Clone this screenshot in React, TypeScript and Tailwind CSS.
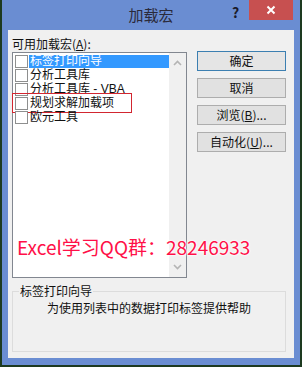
import React from 'react';

const ITEMS = ['标签打印向导', '分析工具库', '分析工具库 - VBA', '规划求解加载项', '欧元工具'];

const FONT = { fontFamily: '"Noto Sans CJK SC", "Liberation Sans", sans-serif' };
const TIGHT = { fontFamily: '"Liberation Sans", "Noto Sans CJK SC", sans-serif' };

function Chevron({ up }: { up?: boolean }) {
  return (
    <svg width="9" height="6" viewBox="0 0 9 6">
      <path
        d={up ? 'M1 5 L4.5 1.5 L8 5' : 'M1 1 L4.5 4.5 L8 1'}
        fill="none"
        stroke="#b4b4b4"
        strokeWidth="1.6"
      />
    </svg>
  );
}

function Button({ children, primary }: { children: React.ReactNode; primary?: boolean }) {
  return (
    <div
      className={`h-[20px] w-[89px] flex items-center justify-center text-[12px] text-[#111] border ${
        primary ? 'border-[#3c7fb1] bg-[#e5e5e5]' : 'border-[#adadad] bg-[#e1e1e1]'
      }`}
    >
      {children}
    </div>
  );
}

export default function App() {
  return (
    <div className="w-[302px] h-[367px] bg-[#1d3a20] px-[2px] pb-[2px]" style={FONT}>
      <div className="w-full h-full bg-[#6a8dd2] flex flex-col">
        {/* Title bar */}
        <div className="relative h-[30px] flex items-center justify-center shrink-0">
          <span className="text-[15px] text-[#2a2a3a] leading-none mt-[-2px]">加载宏</span>
          <span className="absolute left-[230px] top-[2px] text-[14px] font-bold text-[#1a1a2a]">?</span>
          <div className="absolute left-[247px] top-0 w-[44px] h-[20px] bg-[#c75050] flex items-center justify-center">
            <svg width="10" height="10" viewBox="0 0 10 10">
              <path d="M1.5 1.5 L8.5 8.5 M8.5 1.5 L1.5 8.5" stroke="#fff" strokeWidth="2" />
            </svg>
          </div>
        </div>

        {/* Client area */}
        <div className="relative mx-[6px] mb-[7px] flex-1 bg-[#f0f0f0] px-[4px] pt-[6px]">
          <div className="flex gap-[10px]">
            <div className="w-[175px] flex flex-col">
              <div className="h-[16px] text-[12px] leading-[16px] text-[#111]">
                可用加载宏(<span className="underline">A</span>):
              </div>
              <div className="h-[226px] border border-[#828790] bg-white flex">
                <div className="flex-1 pt-px pl-[2px] flex flex-col" style={TIGHT}>
                  {ITEMS.map((it, i) => (
                    <div
                      key={it}
                      className={`relative h-[14px] flex items-center ${
                        i === 3 ? 'outline outline-1 outline-[#d22630] outline-offset-[2px] w-[114px]' : ''
                      }`}
                    >
                      <div className="w-[13px] h-[13px] border border-[#8e8f8f] bg-white shrink-0" />
                      <span
                        className={`ml-[1px] h-[13px] text-[12px] leading-[13px] pl-[1px] ${
                          i === 0 ? 'flex-1 bg-[#3399ff] text-white' : 'text-[#111]'
                        }`}
                      >
                        {it}
                      </span>
                    </div>
                  ))}
                </div>
                <div className="w-[17px] bg-[#f0f0f0] flex flex-col items-center justify-between py-[7px]">
                  <Chevron up />
                  <Chevron />
                </div>
              </div>
            </div>
            <div className="flex flex-col gap-[7px] pt-[15px]">
              <Button primary>确定</Button>
              <Button>取消</Button>
              <Button>
                浏览(<span className="underline">B</span>)...
              </Button>
              <Button>
                自动化(<span className="underline">U</span>)...
              </Button>
            </div>
          </div>

          <fieldset className="mt-[6px] w-[274px] h-[68px] border border-[#dcdcdc] px-[4px]">
            <legend className="ml-[2px] px-[1px] text-[12px] leading-[14px] text-[#111]">标签打印向导</legend>
            <div className="text-center text-[12px] leading-[14px] text-[#111] mt-[3px]">
              为使用列表中的数据打印标签提供帮助
            </div>
          </fieldset>

          {/* watermark */}
          <div
            className="absolute left-[9px] top-[205px] text-[19px] leading-[24px] text-[#ff1048] whitespace-nowrap"
            style={{ textShadow: '0 0 2px #fff, 0 0 2px #fff, 0 0 3px #fff' }}
          >
            Excel学习QQ群：28246933
          </div>
        </div>
      </div>
    </div>
  );
}
